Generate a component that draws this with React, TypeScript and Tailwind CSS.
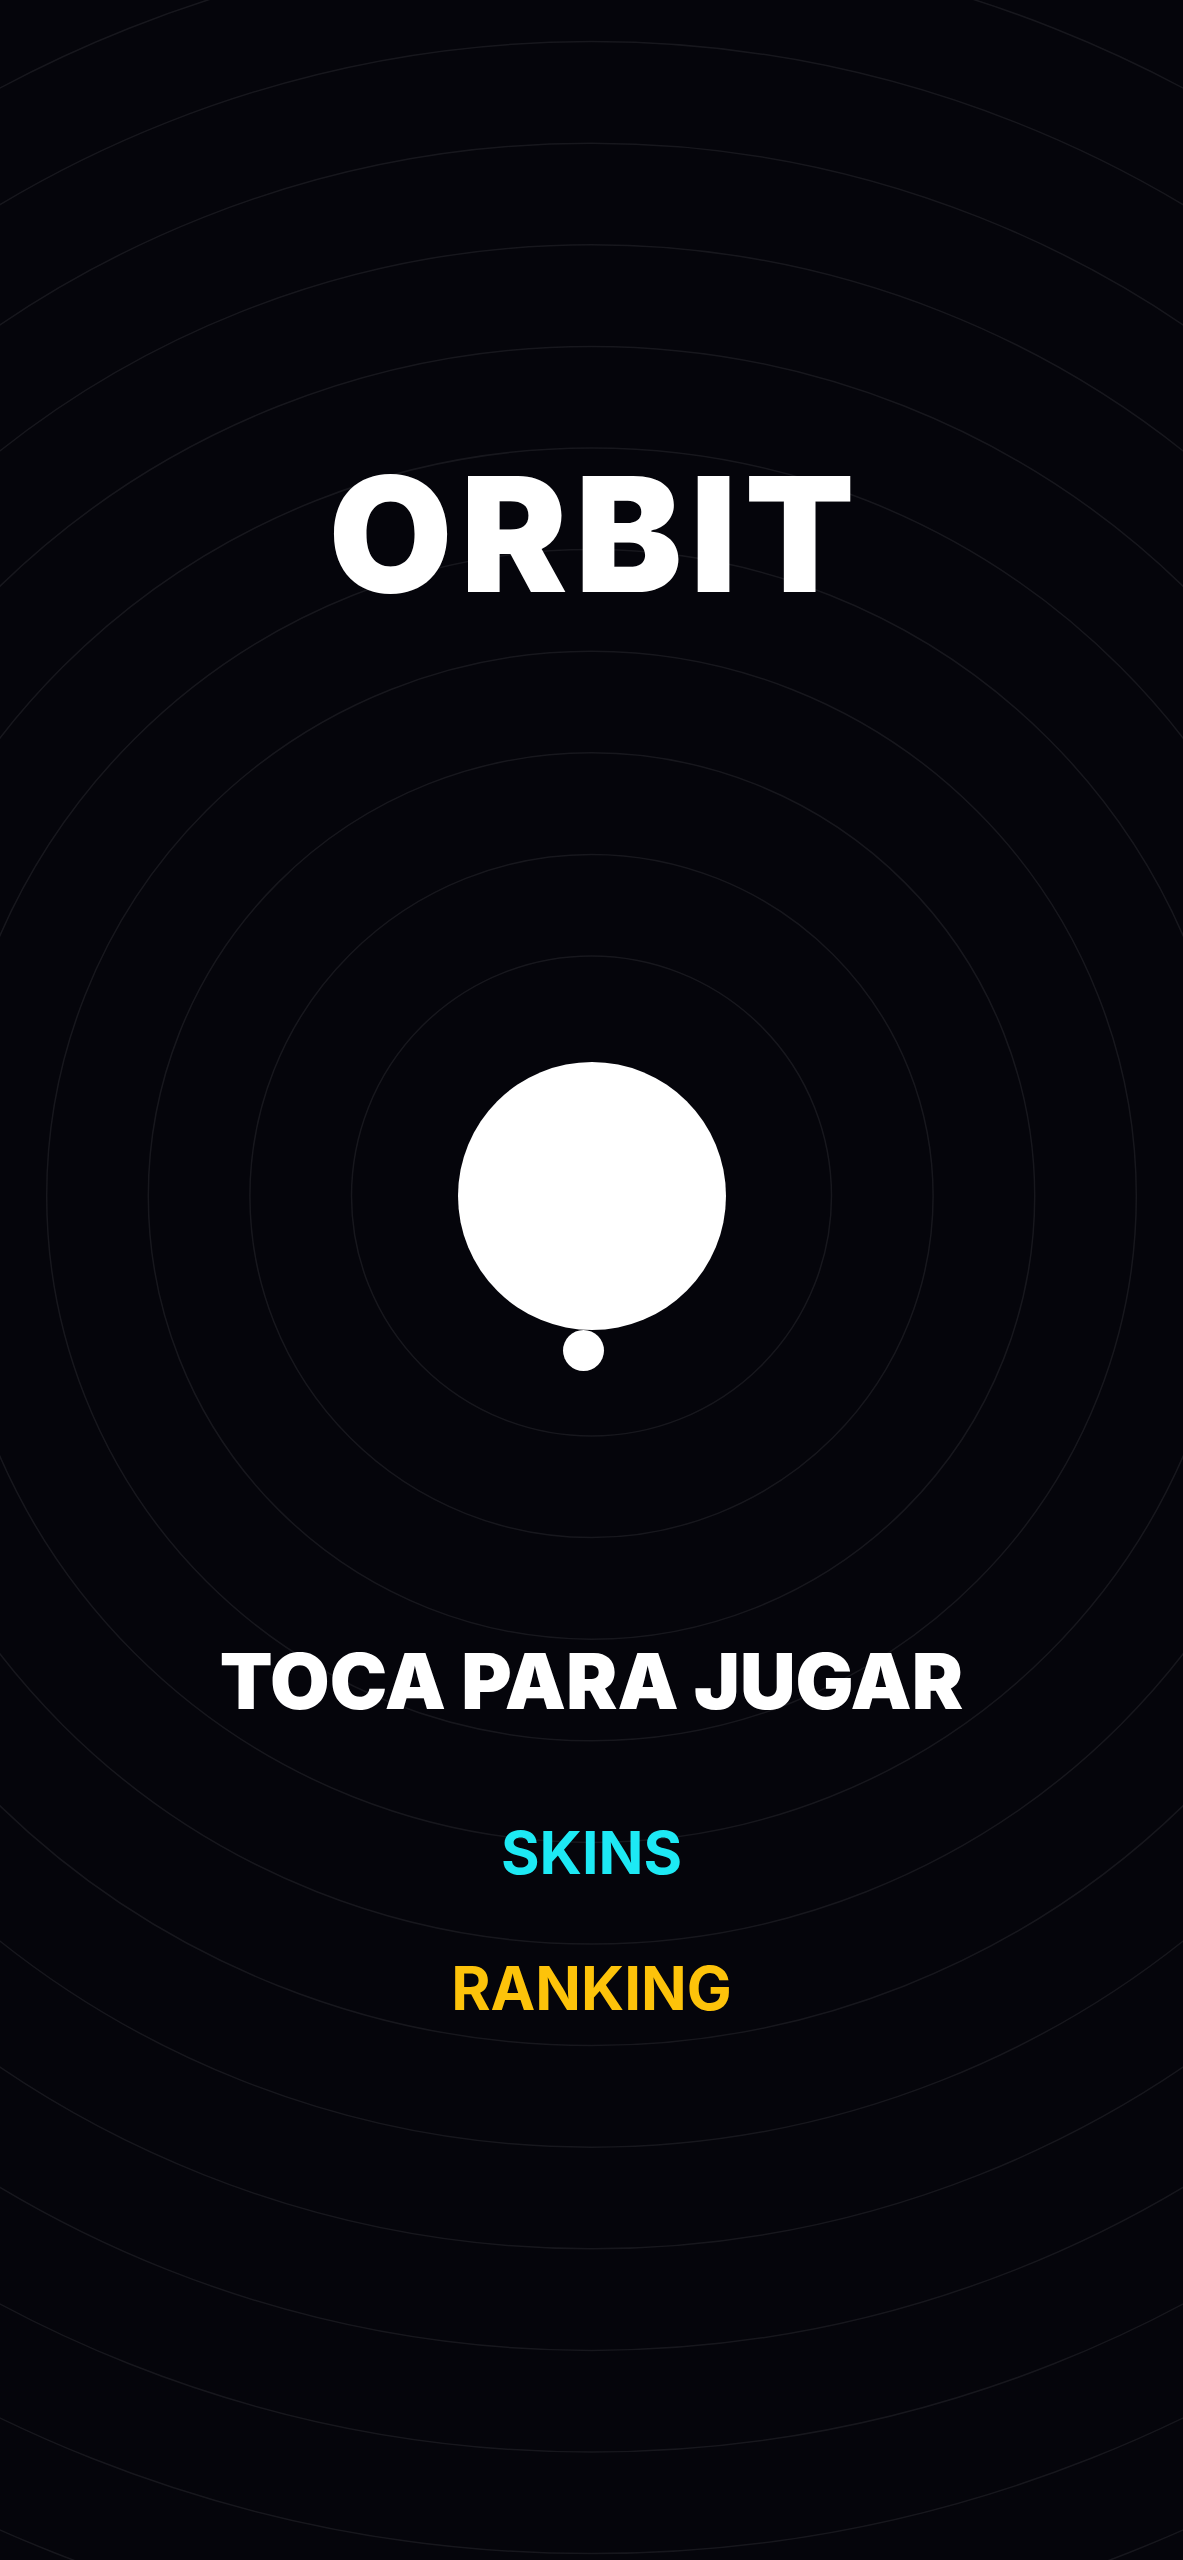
export default function App() {
  const cx = 591.5;
  const cy = 1196;
  const rings = Array.from({ length: 14 }, (_, i) => 240 + i * 101.6);

  return (
    <div className="relative min-h-[2560px] w-full overflow-hidden bg-[#05050b] font-['Inter','Noto_Sans',sans-serif]">
      {/* background orbit rings */}
      <svg className="pointer-events-none absolute inset-0" width="1183" height="2560" viewBox="0 0 1183 2560">
        {rings.map((r) => (
          <circle key={r} cx={cx} cy={cy} r={r} fill="none" stroke="#ffffff" strokeOpacity="0.075" strokeWidth="1.5" />
        ))}
      </svg>

      <div className="relative flex flex-col items-center pt-[454px]">
        <h1 className="pl-[8px] text-[160px] font-black leading-none tracking-[8px] text-white">ORBIT</h1>

        <div className="mt-[448px] h-[268px] w-[268px] rounded-full bg-white" />
        <div className="mr-[16px] h-[41px] w-[41px] rounded-full bg-white" />

        <button className="mt-[272px] text-[77px] font-black leading-none text-white">TOCA PARA JUGAR</button>
        <button className="mt-[103px] text-[59px] font-bold leading-none text-[#1de9f4]">SKINS</button>
        <button className="mt-[76px] text-[60px] font-bold leading-none text-[#fdc30a]">RANKING</button>
      </div>
    </div>
  );
}
